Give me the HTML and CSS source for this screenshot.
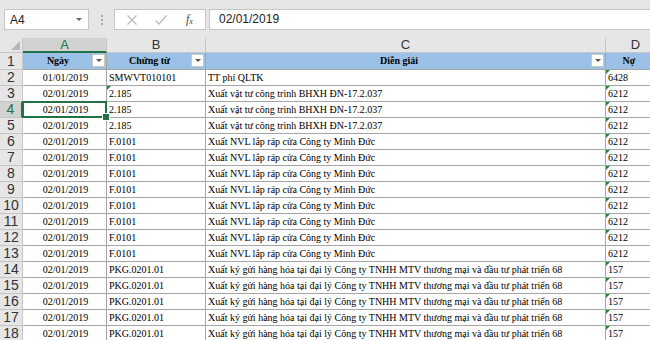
FILE: index.html
```html
<!DOCTYPE html>
<html lang="vi">
<head>
  <meta charset="UTF-8">
  <title>Sổ nhật ký</title>
  <link rel="stylesheet" href="styles.css">
</head>
<body>

<!-- thanh công thức -->
<div class="toolbar">
  <div class="namebox">
    <span>A4</span>
    <i class="caret"></i>
  </div>
  <div class="grip"><i></i><i></i><i></i></div>
  <div class="fbtns">
    <svg width="12" height="12" viewBox="0 0 12 12"><path d="M1.5 1.5 L10.5 10.5 M10.5 1.5 L1.5 10.5" stroke="#b9b9b9" stroke-width="1.2" fill="none"/></svg>
    <svg width="14" height="12" viewBox="0 0 14 12"><path d="M1.5 6.5 L5 10 L12.5 1.5" stroke="#b9b9b9" stroke-width="1.2" fill="none"/></svg>
    <span class="fx">f<sub>x</sub></span>
  </div>
  <div class="formula">02/01/2019</div>
</div>

<!-- bảng tính -->
<div class="sheet">
  <div class="corner"><i></i></div>
  <div class="ch sel">A</div>
  <div class="ch">B</div>
  <div class="ch">C</div>
  <div class="ch">D</div>

  <div class="rh first">1</div>
  <div class="c th first">Ngày<span class="filter"></span></div>
  <div class="c th first">Chứng từ<span class="filter"></span></div>
  <div class="c th first">Diễn giải<span class="filter"></span></div>
  <div class="c th first">Nợ</div>

  <div class="rh">2</div>
  <div class="c ctr">01/01/2019</div>
  <div class="c">SMWVT010101</div>
  <div class="c">TT phí QLTK</div>
  <div class="c err">6428</div>

  <div class="rh">3</div>
  <div class="c ctr">02/01/2019</div>
  <div class="c err">2.185</div>
  <div class="c">Xuất vật tư công trình BHXH ĐN-17.2.037</div>
  <div class="c err">6212</div>

  <div class="rh sel">4</div>
  <div class="c ctr active">02/01/2019</div>
  <div class="c">2.185</div>
  <div class="c">Xuất vật tư công trình BHXH ĐN-17.2.037</div>
  <div class="c err">6212</div>

  <div class="rh">5</div>
  <div class="c ctr">02/01/2019</div>
  <div class="c">2.185</div>
  <div class="c">Xuất vật tư công trình BHXH ĐN-17.2.037</div>
  <div class="c err">6212</div>

  <div class="rh">6</div>
  <div class="c ctr">02/01/2019</div>
  <div class="c">F.0101</div>
  <div class="c">Xuất NVL lắp ráp cửa Công ty Minh Đức</div>
  <div class="c err">6212</div>

  <div class="rh">7</div>
  <div class="c ctr">02/01/2019</div>
  <div class="c">F.0101</div>
  <div class="c">Xuất NVL lắp ráp cửa Công ty Minh Đức</div>
  <div class="c err">6212</div>

  <div class="rh">8</div>
  <div class="c ctr">02/01/2019</div>
  <div class="c">F.0101</div>
  <div class="c">Xuất NVL lắp ráp cửa Công ty Minh Đức</div>
  <div class="c err">6212</div>

  <div class="rh">9</div>
  <div class="c ctr">02/01/2019</div>
  <div class="c">F.0101</div>
  <div class="c">Xuất NVL lắp ráp cửa Công ty Minh Đức</div>
  <div class="c err">6212</div>

  <div class="rh">10</div>
  <div class="c ctr">02/01/2019</div>
  <div class="c">F.0101</div>
  <div class="c">Xuất NVL lắp ráp cửa Công ty Minh Đức</div>
  <div class="c err">6212</div>

  <div class="rh">11</div>
  <div class="c ctr">02/01/2019</div>
  <div class="c">F.0101</div>
  <div class="c">Xuất NVL lắp ráp cửa Công ty Minh Đức</div>
  <div class="c err">6212</div>

  <div class="rh">12</div>
  <div class="c ctr">02/01/2019</div>
  <div class="c">F.0101</div>
  <div class="c">Xuất NVL lắp ráp cửa Công ty Minh Đức</div>
  <div class="c err">6212</div>

  <div class="rh">13</div>
  <div class="c ctr">02/01/2019</div>
  <div class="c">F.0101</div>
  <div class="c">Xuất NVL lắp ráp cửa Công ty Minh Đức</div>
  <div class="c">6212</div>

  <div class="rh">14</div>
  <div class="c ctr">02/01/2019</div>
  <div class="c">PKG.0201.01</div>
  <div class="c">Xuất ký gửi hàng hóa tại đại lý Công ty TNHH MTV thương mại và đầu tư phát triển 68</div>
  <div class="c err">157</div>

  <div class="rh">15</div>
  <div class="c ctr">02/01/2019</div>
  <div class="c">PKG.0201.01</div>
  <div class="c">Xuất ký gửi hàng hóa tại đại lý Công ty TNHH MTV thương mại và đầu tư phát triển 68</div>
  <div class="c err">157</div>

  <div class="rh">16</div>
  <div class="c ctr">02/01/2019</div>
  <div class="c">PKG.0201.01</div>
  <div class="c">Xuất ký gửi hàng hóa tại đại lý Công ty TNHH MTV thương mại và đầu tư phát triển 68</div>
  <div class="c err">157</div>

  <div class="rh">17</div>
  <div class="c ctr">02/01/2019</div>
  <div class="c">PKG.0201.01</div>
  <div class="c">Xuất ký gửi hàng hóa tại đại lý Công ty TNHH MTV thương mại và đầu tư phát triển 68</div>
  <div class="c err">157</div>

  <div class="rh">18</div>
  <div class="c ctr">02/01/2019</div>
  <div class="c">PKG.0201.01</div>
  <div class="c">Xuất ký gửi hàng hóa tại đại lý Công ty TNHH MTV thương mại và đầu tư phát triển 68</div>
  <div class="c err">157</div>
</div>

</body>
</html>
```

FILE: styles.css
```css
* {
  margin: 0;
  padding: 0;
  box-sizing: border-box;
}
html, body {
  width: 650px;
  height: 340px;
  overflow: hidden;
  background: #fff;
}
body {
  font-family: "Liberation Sans", Arial, sans-serif;
}

/* thanh công thức */
.toolbar {
  height: 38px;
  background: #e6e6e6;
  display: flex;
  align-items: flex-start;
  padding: 9px 0 0 4px;
}
.namebox {
  width: 85px;
  height: 21px;
  background: #fff;
  border: 1px solid #c6c6c6;
  display: flex;
  align-items: center;
  justify-content: space-between;
  padding: 0 6px 0 5px;
  font-size: 12px;
  color: #222;
}
.caret {
  width: 0;
  height: 0;
  border-left: 3px solid transparent;
  border-right: 3px solid transparent;
  border-top: 3px solid #666;
}
.grip {
  width: 25px;
  height: 21px;
  display: flex;
  flex-direction: column;
  align-items: center;
  justify-content: center;
  gap: 2px;
}
.grip i {
  width: 2px;
  height: 2px;
  background: #aaa;
}
.fbtns {
  width: 92px;
  height: 21px;
  background: #fff;
  border: 1px solid #c6c6c6;
  display: flex;
  align-items: center;
  padding: 0 0 0 11px;
  gap: 16px;
}
.fx {
  font-family: "Liberation Serif", serif;
  font-style: italic;
  font-size: 12px;
  color: #444;
  margin-left: 2px;
}
.fx sub {
  font-size: 8px;
  vertical-align: -1px;
}
.formula {
  flex: 1;
  height: 21px;
  margin-left: 3px;
  background: #fff;
  border: 1px solid #c6c6c6;
  border-right: 0;
  font-size: 12px;
  color: #222;
  line-height: 19px;
  padding-left: 9px;
}

/* bảng tính */
.sheet {
  display: grid;
  grid-template-columns: 23px 84px 99px 400px 60px;
  grid-template-rows: 15px 17px;
  grid-auto-rows: 16px;
}
.corner {
  background: #e6e6e6;
  border-right: 1px solid #c6c6c6;
  border-bottom: 1px solid #c6c6c6;
  position: relative;
}
.corner i {
  position: absolute;
  right: 2px;
  bottom: 2px;
  width: 0;
  height: 0;
  border-left: 9px solid transparent;
  border-bottom: 9px solid #b7b7b7;
}
.ch {
  background: #e6e6e6;
  border-right: 1px solid #c6c6c6;
  border-bottom: 1px solid #c6c6c6;
  text-align: center;
  font-size: 13px;
  line-height: 14px;
  color: #333;
}
.ch.sel {
  background: #d2d2d2;
  color: #217346;
  border-bottom: 2px solid #217346;
}
.rh {
  background: #e6e6e6;
  border-right: 1px solid #c6c6c6;
  border-bottom: 1px solid #c6c6c6;
  text-align: center;
  font-size: 14px;
  line-height: 15px;
  color: #333;
}
.rh.first {
  line-height: 16px;
}
.rh.sel {
  background: #d2d2d2;
  color: #217346;
  border-right: 2px solid #217346;
}

.c {
  position: relative;
  border-right: 1px solid #a6a6a6;
  border-bottom: 1px solid #a6a6a6;
  font-family: "Liberation Serif", "Times New Roman", serif;
  font-size: 10px;
  line-height: 16px;
  padding-left: 2px;
  color: #000;
  white-space: nowrap;
  overflow: hidden;
}
.c.first {
  line-height: 16px;
}
.c.ctr {
  text-align: center;
}
.c.th {
  background: #9bc2e6;
  font-weight: bold;
  text-align: center;
  padding-right: 15px;
}
.c.th:last-child {
  padding-right: 0;
}
.filter {
  position: absolute;
  right: 1px;
  top: 1px;
  width: 13px;
  height: 13px;
  background: #fff;
  border: 1px solid #c8c8c8;
}
.filter::after {
  content: "";
  position: absolute;
  left: 3px;
  top: 4px;
  border-left: 3px solid transparent;
  border-right: 3px solid transparent;
  border-top: 3px solid #555;
}

/* tam giác báo lỗi */
.c.err::before {
  content: "";
  position: absolute;
  left: 0;
  top: 0;
  border-top: 4px solid #1e8a2e;
  border-right: 4px solid transparent;
}

/* ô đang chọn */
.c.active {
  overflow: visible;
}
.c.active::after {
  content: "";
  position: absolute;
  left: -1px;
  top: -1px;
  right: -1px;
  bottom: -1px;
  border: 2px solid #217346;
}
.c.active::before {
  content: "";
  position: absolute;
  right: -4px;
  bottom: -4px;
  width: 6px;
  height: 6px;
  background: #217346;
  border: 1px solid #fff;
  z-index: 2;
}
```
